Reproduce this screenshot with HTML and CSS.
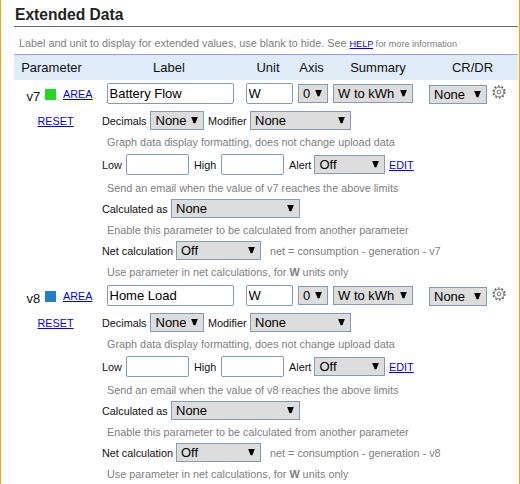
FILE: index.html
```html
<!DOCTYPE html>
<html lang="en">
<head>
<meta charset="utf-8">
<title>Extended Data</title>
<link rel="stylesheet" href="styles.css">
</head>
<body>
<svg width="0" height="0" class="defs">
  <symbol id="gear" viewBox="0 0 14 14">
    <circle cx="7" cy="7" r="5.9" fill="none" stroke="#555" stroke-width="1.3" stroke-dasharray="1.85 1.85"/>
    <circle cx="7" cy="7" r="4.8" fill="none" stroke="#777" stroke-width=".9"/>
    <circle cx="7" cy="7" r="1.9" fill="none" stroke="#666" stroke-width=".9"/>
  </symbol>
  <symbol id="arrow" viewBox="0 0 7 7">
    <path d="M.2 0h6.6L4.4 6.3H2.6z" fill="#000"/>
  </symbol>
</svg>
<main class="panel">
  <h1>Extended Data</h1>
  <p class="intro">Label and unit to display for extended values, use blank to hide. See <small><a href="#">HELP</a> for more information</small></p>
  <div class="head">
    <span class="h-param">Parameter</span><span class="h-label">Label</span><span class="h-unit">Unit</span><span class="h-axis">Axis</span><span class="h-sum">Summary</span><span class="h-cr">CR/DR</span>
  </div>

  <section class="param">
    <div class="side">
      <div class="name"><span class="id">v7</span><i class="swatch green"></i><a href="#">AREA</a></div>
      <div class="reset"><a href="#">RESET</a></div>
    </div>
    <div class="fields">
      <div class="row main">
        <input class="in-label" value="Battery Flow"><input class="in-unit" value="W">
        <span class="select s-axis">0<svg><use href="#arrow"/></svg></span>
        <span class="select s-sum">W to kWh<svg><use href="#arrow"/></svg></span>
        <span class="select s-cr">None<svg><use href="#arrow"/></svg></span>
        <svg class="gear"><use href="#gear"/></svg>
      </div>
      <div class="row"><label class="l-dec">Decimals</label><span class="select s-dec">None<svg><use href="#arrow"/></svg></span><label class="l-mod">Modifier</label><span class="select s-mod">None<svg><use href="#arrow"/></svg></span></div>
      <p class="hint">Graph data display formatting, does not change upload data</p>
      <div class="row limits"><label class="l-low">Low</label><input class="in-lim"><label class="l-high">High</label><input class="in-lim"><label class="l-alert">Alert</label><span class="select s-alert">Off<svg><use href="#arrow"/></svg></span><a class="edit" href="#">EDIT</a></div>
      <p class="hint">Send an email when the value of v7 reaches the above limits</p>
      <div class="row calc"><label class="l-calc">Calculated as</label><span class="select s-calc">None<svg><use href="#arrow"/></svg></span></div>
      <p class="hint">Enable this parameter to be calculated from another parameter</p>
      <div class="row net"><label class="l-net">Net calculation</label><span class="select s-net">Off<svg><use href="#arrow"/></svg></span><span class="formula">net = consumption - generation - v7</span></div>
      <p class="hint">Use parameter in net calculations, for <b>W</b> units only</p>
    </div>
  </section>

  <section class="param">
    <div class="side">
      <div class="name"><span class="id">v8</span><i class="swatch blue"></i><a href="#">AREA</a></div>
      <div class="reset"><a href="#">RESET</a></div>
    </div>
    <div class="fields">
      <div class="row main">
        <input class="in-label" value="Home Load"><input class="in-unit" value="W">
        <span class="select s-axis">0<svg><use href="#arrow"/></svg></span>
        <span class="select s-sum">W to kWh<svg><use href="#arrow"/></svg></span>
        <span class="select s-cr">None<svg><use href="#arrow"/></svg></span>
        <svg class="gear"><use href="#gear"/></svg>
      </div>
      <div class="row"><label class="l-dec">Decimals</label><span class="select s-dec">None<svg><use href="#arrow"/></svg></span><label class="l-mod">Modifier</label><span class="select s-mod">None<svg><use href="#arrow"/></svg></span></div>
      <p class="hint">Graph data display formatting, does not change upload data</p>
      <div class="row limits"><label class="l-low">Low</label><input class="in-lim"><label class="l-high">High</label><input class="in-lim"><label class="l-alert">Alert</label><span class="select s-alert">Off<svg><use href="#arrow"/></svg></span><a class="edit" href="#">EDIT</a></div>
      <p class="hint">Send an email when the value of v8 reaches the above limits</p>
      <div class="row calc"><label class="l-calc">Calculated as</label><span class="select s-calc">None<svg><use href="#arrow"/></svg></span></div>
      <p class="hint">Enable this parameter to be calculated from another parameter</p>
      <div class="row net"><label class="l-net">Net calculation</label><span class="select s-net">Off<svg><use href="#arrow"/></svg></span><span class="formula">net = consumption - generation - v8</span></div>
      <p class="hint">Use parameter in net calculations, for <b>W</b> units only</p>
    </div>
  </section>
</main>
</body>
</html>
```

FILE: styles.css
```css
* { box-sizing: border-box; }
html { overflow: hidden; }
body {
  margin: 0;
  background: #fff;
  color: #111;
  font-family: "Liberation Sans", Arial, sans-serif;
  font-size: 10.83px;
}
.defs { display: none; }
.panel {
  width: 520px;
  height: 484px;
  overflow: hidden;
  border-left: 1px solid #ffa500;
  border-right: 1px solid #ffa500;
  padding-left: 13px;
  padding-right: 1px;
  white-space: nowrap;
}
a { color: #00f; }
h1 {
  margin: 0;
  height: 27px;
  padding: 5px 0 0 1px;
  border-bottom: 1px solid #666;
  font-size: 15.6px;
  line-height: 19px;
  color: #222;
}
.intro {
  margin: 0;
  height: 27px;
  padding: 9px 0 0 5px;
  line-height: 14px;
  color: #808080;
}
.intro small { font-size: 9.1px; }
.head {
  display: flex;
  height: 26px;
  border-top: 1px solid #99f;
  background: #dfebf7;
  font-size: 13px;
  line-height: 26px;
  text-align: center;
}
.head span { flex: none; }
.h-param { width: 75px; }
.h-label { width: 160px; }
.h-unit { width: 38px; }
.h-axis { width: 49px; }
.h-sum { width: 84px; }
.h-cr { width: 98px; padding-left: 7px; }

.param { display: flex; height: 202px; }
.side { width: 88px; }
.name {
  display: flex;
  align-items: center;
  height: 28px;
  padding-left: 12.5px;
}
.id { width: 18.5px; font-size: 13px; line-height: 16px; margin-top: 6px; }
.swatch { width: 11px; height: 11px; margin-right: 7px; margin-top: 1px; }
.green { background: #22d822; }
.blue { background: #227ec8; }
.reset { height: 27px; padding-left: 23.5px; line-height: 27px; }

.row { display: flex; align-items: center; height: 27px; }
.main { padding-left: 5px; }
.limits { height: 29px; }
.hint {
  margin: 0;
  height: 16px;
  padding-left: 5px;
  line-height: 17px;
  color: #808080;
}
.limits + .hint { line-height: 18px; }
.calc + .hint { height: 15px; }

input {
  height: 21px;
  margin: 0;
  padding: 0 2px 0 1.5px;
  border: 1px solid #7f9db9;
  border-radius: 2px;
  background: #fff;
  color: #000;
  font: 13px "Liberation Sans", Arial, sans-serif;
}
.in-label { width: 127px; margin-right: 12px; }
.in-unit { width: 47px; margin-right: 5px; }
.in-lim { width: 63px; }

.select {
  display: flex;
  flex: none;
  justify-content: space-between;
  height: 19px;
  padding: 0 5px 0 4px;
  border: 1px solid #7f9db9;
  background: #ddd;
  color: #000;
  font-size: 13px;
  line-height: 17px;
}
.select svg { width: 7px; height: 7px; margin-top: 5px; flex: none; }
.s-axis { width: 30px; margin-right: 5px; }
.s-sum { width: 80px; margin-right: 16px; }
.s-cr { width: 58px; margin-right: 5px; position: relative; top: 1px; }
.gear { width: 14px; height: 14px; margin: 0 0 4px -.5px; }
.s-dec { width: 54px; padding-left: 4.5px; }
.s-mod { width: 101px; }
.s-alert { width: 71px; padding-left: 4.5px; }
.s-calc { width: 129px; }
.s-net { width: 85px; }

.l-dec { width: 48px; }
.l-mod { width: 46px; padding-left: 4px; }
.l-low { width: 24px; }
.l-high { width: 32px; padding-left: 5px; }
.l-alert { width: 30px; padding-left: 5px; }
.l-calc { width: 69px; }
.l-net { width: 74px; }
.edit { margin-left: 4px; }
.formula { margin-left: 9px; color: #808080; }
```
